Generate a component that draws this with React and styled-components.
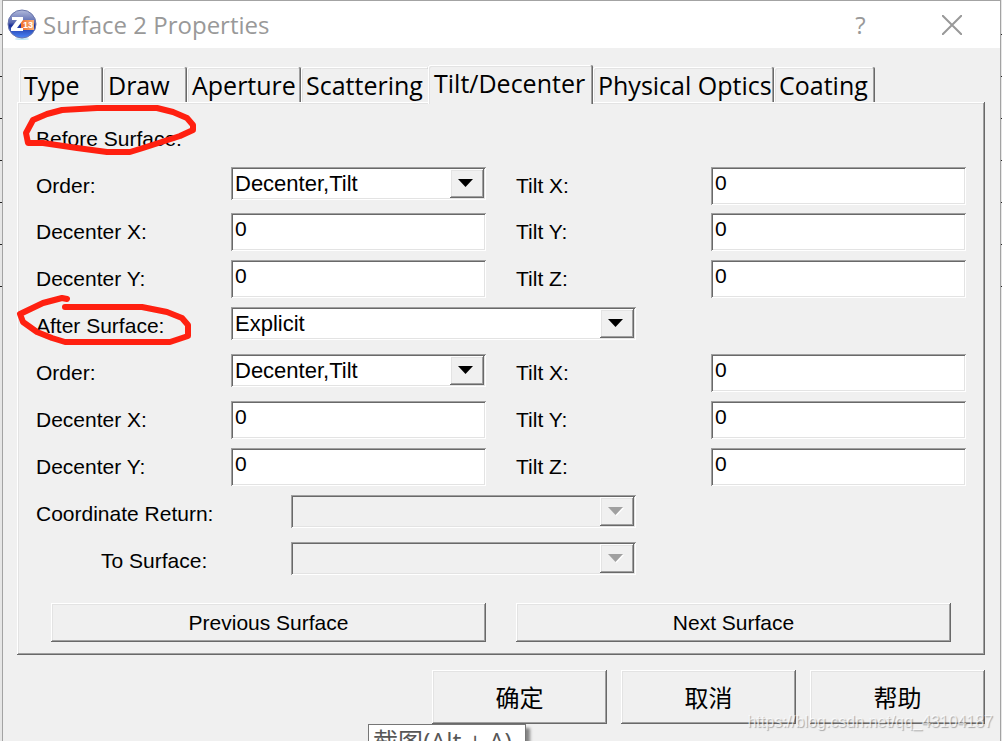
import { useId, useState } from "react";
import styled, { createGlobalStyle, css } from "styled-components";

const GlobalStyle = createGlobalStyle`
  * {
    box-sizing: border-box;
  }
  body {
    margin: 0;
    background: #f0f0f0;
  }
  button, input, select {
    font: inherit;
    color: inherit;
    margin: 0;
    border: 0;
    border-radius: 0;
  }
`;

const uiFont = `"Open Sans", "Noto Sans", sans-serif`;
const cjkFont = `"Open Sans", "Noto Sans CJK SC", sans-serif`;

const sunken = css`
  box-shadow: inset 1px 1px #a0a0a0, inset -1px -1px #fff,
    inset 2px 2px #696969, inset -2px -2px #e3e3e3;
`;

const raised = css`
  box-shadow: inset -1px -1px #696969, inset 1px 1px #fff,
    inset -2px -2px #a0a0a0, inset 2px 2px #e3e3e3;
`;

const Desktop = styled.div`
  min-height: 100vh;
  display: flex;
  padding: 0 1px 0 2px;
  overflow: hidden;
  background: #e6e6e6
    repeating-linear-gradient(
      transparent 0 34px,
      #222 34px 35px,
      transparent 35px 42px
    )
    0 0 / 100% 294px no-repeat;
`;

const Dialog = styled.div`
  flex: 1;
  min-width: 0;
  border: 1px solid #a3a3a3;
  border-bottom: 0;
  background: #f0f0f0;
  color: #000;
  font-family: "Liberation Sans", Arial, sans-serif;
  font-size: 21px;
`;

const TitleBar = styled.header`
  display: flex;
  align-items: center;
  height: 47px;
  padding: 0 3px;
  background: #fff;
  color: #999;
  font-family: ${uiFont};
  font-size: 24px;

  h1 {
    flex: 1;
    margin: 0 0 0 5px;
    font-size: inherit;
    font-weight: 400;
    line-height: 44px;
  }
`;

const TitleButton = styled.button`
  display: flex;
  align-items: center;
  justify-content: center;
  width: 91px;
  height: 44px;
  padding: 0;
  background: none;
`;

const Body = styled.main`
  padding: 17px 15px 17px 14px;
`;

const TabStrip = styled.div`
  display: flex;
  align-items: flex-end;
  padding-left: 2px;
  height: 37px;
`;

const Tab = styled.button`
  width: ${(p) => p.$width}px;
  height: 35px;
  padding: 0 0 0 5px;
  background: #f0f0f0;
  border-radius: 2px 2px 0 0;
  box-shadow: inset -1px 0 #696969, inset 1px 1px #fff, inset -2px 0 #a0a0a0,
    inset 2px 2px #e3e3e3;
  font-family: ${uiFont};
  font-size: 25px;
  line-height: 34px;
  text-align: left;
  white-space: nowrap;

  &[aria-selected="true"] {
    position: relative;
    height: 39px;
    margin: 0 0 -2px -2px;
    padding-bottom: 4px;
    padding-left: 6px;
  }
`;

const Panel = styled.section`
  padding: 18px 19px 13px;
  ${raised}
`;

const Row = styled.div`
  display: grid;
  grid-template-columns: ${(p) => p.$columns || "13fr 17fr 2fr 13fr 17fr"};
  height: ${(p) => (p.$tight ? 46 : 47)}px;
  align-items: start;
`;

const Label = styled.label`
  position: relative;
  padding-left: ${(p) => (p.$indent ? "65px" : "0")};
  line-height: 38px;
  white-space: nowrap;
`;

const TextBox = styled.input`
  width: 100%;
  height: 38px;
  padding: 2px 4px 9px;
  background: #fff;
  ${sunken}
`;

const SelectFrame = styled.div`
  display: grid;

  > * {
    grid-area: 1 / 1;
  }
`;

const SelectBox = styled.select`
  appearance: none;
  width: 100%;
  height: 33px;
  padding: 2px 38px 2px 4px;
  background: #fff;
  font-size: 22px;
  ${sunken}

  &:disabled {
    background: #f0f0f0;
    opacity: 1;
  }
`;

const ArrowBox = styled.span`
  justify-self: end;
  display: flex;
  align-items: center;
  justify-content: center;
  width: 34px;
  height: 29px;
  margin: 2px 2px 0 0;
  background: #f0f0f0;
  pointer-events: none;
  ${raised}
`;

const PushButton = styled.button`
  height: 39px;
  padding: 0 10px;
  background: #f0f0f0;
  ${raised}
`;

const SurfaceNav = styled.div`
  display: grid;
  grid-template-columns: 1fr 1fr;
  gap: 30px;
  margin-top: 14px;
  padding: 0 15px;
`;

const Footer = styled.footer`
  position: relative;
  display: flex;
  justify-content: flex-end;
  gap: 14px;
  margin-top: 15px;
`;

const FooterButton = styled(PushButton)`
  width: 175px;
  height: 54px;
  padding: 0 10px 2px;
  font-family: ${cjkFont};
  font-size: 24px;
`;

const Tooltip = styled.div`
  position: absolute;
  top: 54px;
  right: 459px;
  width: 158px;
  height: 42px;
  padding-left: 4px;
  border: 1px solid #767676;
  background: #fff;
  box-shadow: 4px 4px 3px rgba(0, 0, 0, 0.45);
  color: #575757;
  font-family: ${cjkFont};
  font-size: 25px;
  line-height: 32px;
  white-space: nowrap;
`;

const Watermark = styled.span`
  position: absolute;
  top: 42px;
  right: -8px;
  color: rgba(255, 255, 255, 0.7);
  font-size: 16px;
  line-height: 20px;
  text-shadow: 1px 1px 1px rgba(0, 0, 0, 0.3);
  pointer-events: none;
`;

const InkMark = styled.svg`
  position: absolute;
  top: -16px;
  left: -22px;
  fill: none;
  stroke: #ff2010;
  stroke-width: 6;
  stroke-linecap: round;
  stroke-linejoin: round;
  pointer-events: none;
`;

function AppLogo() {
  return (
    <svg width="32" height="32" viewBox="0 0 32 32" aria-hidden="true">
      <defs>
        <linearGradient id="ball" x1="0" y1="0" x2="0" y2="1">
          <stop offset="0" stopColor="#b3bbdc" />
          <stop offset="0.45" stopColor="#5666ae" />
          <stop offset="0.55" stopColor="#1b2f98" />
          <stop offset="1" stopColor="#4a86fa" />
        </linearGradient>
        <linearGradient id="badge" x1="0" y1="0" x2="1" y2="0">
          <stop offset="0" stopColor="#f0702a" />
          <stop offset="1" stopColor="#f9ae78" />
        </linearGradient>
      </defs>
      <ellipse cx="16" cy="30" rx="7" ry="1" fill="#bfe6f5" />
      <circle cx="16" cy="15" r="14" fill="url(#ball)" stroke="#6a76ac" />
      <rect x="15" y="11" width="13" height="10" fill="url(#badge)" />
      <path d="M6 8h11v3l-6 8h6v3H5v-3l6-8H6z" fill="#fff" />
      <text
        x="17"
        y="19"
        fill="#fff"
        fontFamily="Liberation Sans, sans-serif"
        fontSize="9"
        fontWeight="700"
      >
        13
      </text>
    </svg>
  );
}

function Select({ id, options, disabled }) {
  return (
    <SelectFrame>
      <SelectBox id={id} disabled={disabled}>
        {options.map((option) => (
          <option key={option}>{option}</option>
        ))}
      </SelectBox>
      <ArrowBox>
        <svg width="18" height="9" viewBox="0 0 18 9" aria-hidden="true">
          {disabled && <path d="M1 1h15L8.500 9z" fill="#fff" />}
          <path d="M0 0h15L7.500 8z" fill={disabled ? "#a0a0a0" : "#000"} />
        </svg>
      </ArrowBox>
    </SelectFrame>
  );
}

function TiltFields({ left, right, tight }) {
  const id = useId();
  return (
    <Row $tight={tight}>
      <Label htmlFor={`${id}-l`}>{left}</Label>
      {left === "Order:" ? (
        <Select id={`${id}-l`} options={["Decenter,Tilt", "Tilt,Decenter"]} />
      ) : (
        <TextBox id={`${id}-l`} defaultValue="0" />
      )}
      <span />
      <Label htmlFor={`${id}-r`}>{right}</Label>
      <TextBox id={`${id}-r`} defaultValue="0" />
    </Row>
  );
}

function TiltGroup({ tight }) {
  return (
    <>
      <TiltFields left="Order:" right="Tilt X:" tight={tight} />
      <TiltFields left="Decenter X:" right="Tilt Y:" />
      <TiltFields left="Decenter Y:" right="Tilt Z:" />
    </>
  );
}

const tabs = [
  { name: "Type", width: 84 },
  { name: "Draw", width: 84 },
  { name: "Aperture", width: 114 },
  { name: "Scattering", width: 129 },
  { name: "Tilt/Decenter", width: 165 },
  { name: "Physical Optics", width: 181 },
  { name: "Coating", width: 101 },
];

function App() {
  const [active, setActive] = useState("Tilt/Decenter");

  return (
    <>
      <GlobalStyle />
      <Desktop>
        <Dialog role="dialog" aria-label="Surface 2 Properties">
          <TitleBar>
            <AppLogo />
            <h1>Surface 2 Properties</h1>
            <TitleButton aria-label="Help">?</TitleButton>
            <TitleButton aria-label="Close">
              <svg width="20" height="20" viewBox="0 0 20 20">
                <path d="M0 0l20 20M20 0L0 20" stroke="#999" strokeWidth="2" />
              </svg>
            </TitleButton>
          </TitleBar>

          <Body>
            <TabStrip role="tablist">
              {tabs.map(({ name, width }) => (
                <Tab
                  key={name}
                  role="tab"
                  aria-selected={name === active}
                  $width={width}
                  onClick={() => setActive(name)}
                >
                  {name}
                </Tab>
              ))}
            </TabStrip>

            <Panel role="tabpanel">
              <Row>
                <Label as="span">
                  Before Surface:
                  <InkMark width="184" height="54" viewBox="14 104 184 54">
                    <path d="M28 143L26 133L33 120L47 114L62 110L97 108H157L173 112L187 118L193 125V130L180 136L143 148L130 152H107L77 148L43 143Z" />
                  </InkMark>
                </Label>
              </Row>
              <TiltGroup tight />
              <Row $columns="13fr 27fr 22fr">
                <Label htmlFor="after">
                  After Surface:
                  <InkMark width="184" height="56" viewBox="14 291 184 56">
                    <path d="M67 299L62 298L43 303L20 314L23 322L37 332L52 338L65 342H170L188 336V325L182 318L167 312L142 307H65" />
                  </InkMark>
                </Label>
                <Select id="after" options={["Explicit", "Pickup This"]} />
              </Row>
              <TiltGroup />
              <Row $columns="17fr 23fr 22fr">
                <Label htmlFor="return">Coordinate Return:</Label>
                <Select id="return" options={[""]} disabled />
              </Row>
              <Row $columns="17fr 23fr 22fr">
                <Label htmlFor="to" $indent>
                  To Surface:
                </Label>
                <Select id="to" options={[""]} disabled />
              </Row>
              <SurfaceNav>
                <PushButton>Previous Surface</PushButton>
                <PushButton>Next Surface</PushButton>
              </SurfaceNav>
            </Panel>

            <Footer>
              <FooterButton>确定</FooterButton>
              <FooterButton>取消</FooterButton>
              <FooterButton>帮助</FooterButton>
              <Tooltip role="tooltip">截图(Alt + A)</Tooltip>
              <Watermark>https://blog.csdn.net/qq_43104187</Watermark>
            </Footer>
          </Body>
        </Dialog>
      </Desktop>
    </>
  );
}

export default App;
